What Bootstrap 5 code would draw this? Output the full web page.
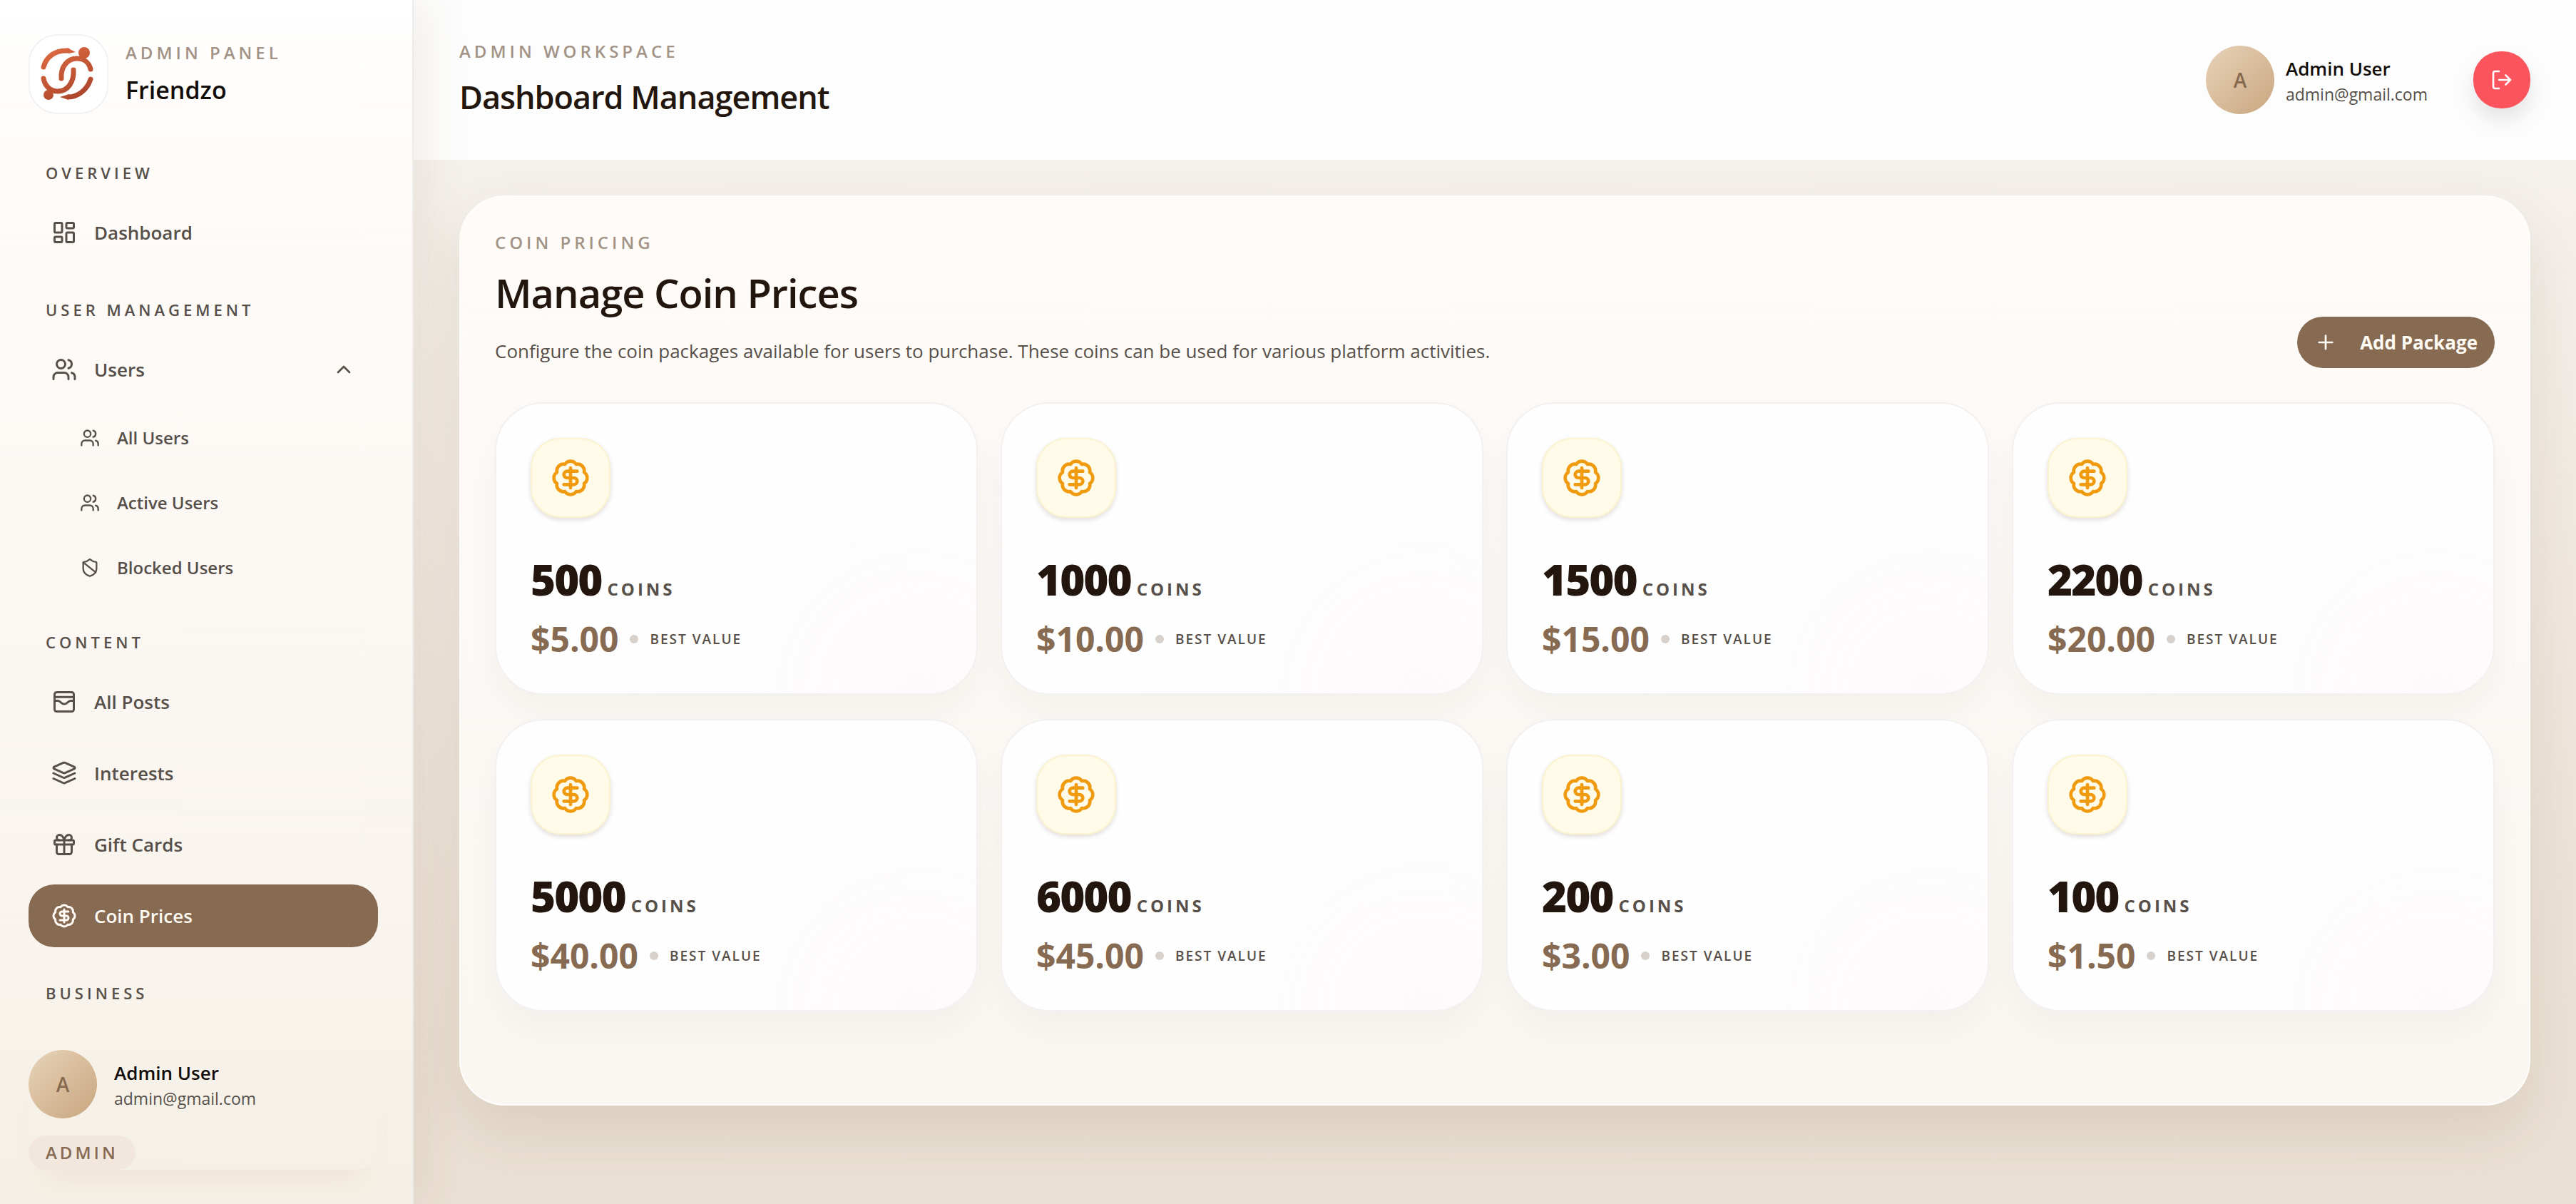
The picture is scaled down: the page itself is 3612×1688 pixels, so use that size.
<!DOCTYPE html>
<html lang="en">
<head>
<meta charset="utf-8">
<meta name="viewport" content="width=device-width, initial-scale=1">
<title>Friendzo Admin</title>
<link rel="stylesheet" href="https://cdn.jsdelivr.net/npm/bootstrap@5.3.0/dist/css/bootstrap.min.css">
<style>
:root{--ink:#22160e;--muted:#57504a;--brown:#876a52;--soft:#a29386}
body{font-family:"Open Sans","Noto Sans",sans-serif;font-size:26px;color:var(--ink);background:linear-gradient(180deg,#f7f4f2 0%,#f4efea 20%,#ece2d7 75%,#eae0d3 100%);background-attachment:fixed}
a{text-decoration:none}
.ico{width:36px;height:36px;fill:none;stroke:currentColor;stroke-width:2;stroke-linecap:round;stroke-linejoin:round;flex:none}
.ico-md{width:32px;height:32px}
.ico-sm{width:28px;height:28px}
.eyebrow{font-size:24px;line-height:32px;font-weight:600;letter-spacing:5px;color:var(--soft);text-transform:uppercase}

.side{width:580px;flex:none;padding:48px 48px 48px 40px;border-right:2px solid #eeecea;background:linear-gradient(180deg,#fff 0%,#fffbf8 14%,#fbf7f3 50%,#f8f3ec 80%,#f5f0e5 100%);box-shadow:16px 0 60px rgba(120,90,40,.09);position:relative;z-index:2}
.brand{gap:24px;margin-bottom:66px;color:#120d09}
.brand-logo{width:112px;height:112px;border:2px solid #f3f2f2;border-radius:40px;background:#fff}
.brand-text{gap:12px}
.brand-name{font-size:34px;line-height:48px;font-weight:600}
.nav-label{font-size:22px;line-height:32px;font-weight:600;letter-spacing:5px;color:var(--muted);padding-left:24px;margin:0 0 24px}
.nav-group{margin-bottom:48px}
.side-link{height:88px;border:0;background:none;border-radius:36px;padding:0 32px;gap:24px;color:var(--muted);font-weight:600;width:100%}
.side-link.active{background:var(--brown);color:#fffaf3}
.nav-stack{gap:12px}
.sub-stack{gap:11px;padding-top:12px}
.sub-link{height:80px;padding-left:72px;gap:24px;color:var(--muted);font-weight:600;font-size:24px}
.avatar{width:96px;height:96px;border-radius:50%;background:linear-gradient(135deg,#e8d3ba,#c8a67e);color:#86694f;font-size:28px;font-weight:600;flex:none}
.user-name{font-size:26px;line-height:40px;font-weight:600;color:#120d09}
.user-mail{font-size:23px;line-height:32px;color:var(--muted)}
.role-tag{font-size:24px;line-height:48px;font-weight:600;letter-spacing:4px;color:var(--brown);background:#f1e7df;border-radius:24px;padding:0 24px;margin-top:24px;display:block;width:max-content}
.side-foot{margin-top:auto;border-radius:32px;box-shadow:0 36px 40px -24px rgba(190,110,90,.1)}

.topbar{background:#fdfdfd;padding:56px 64px}
.topbar-title{font-size:45px;line-height:64px;font-weight:600;letter-spacing:-1px;margin:16px 0 0}
.logout{width:80px;height:80px;border:0;border-radius:38px;background:#fb545c;color:#fff;box-shadow:0 16px 28px rgba(60,60,70,.13)}
.work{padding:50px 64px 138px}
.panel{border:2px solid #fefdfb;border-radius:64px;padding:48px 48px 130px;background:linear-gradient(180deg,#fefbf8,#faf7f3);box-shadow:0 36px 80px rgba(100,70,30,.12)}
.panel-title{font-size:56px;line-height:80px;font-weight:600;letter-spacing:-1px;margin:14px 0 0}
.panel-text{line-height:48px;color:var(--muted);margin:18px 0 0}
.add-btn{height:72px;border:0;border-radius:36px;background:var(--brown);color:#fffaf3;font-weight:700;padding:0 24px;gap:32px}
.packs{--bs-gutter-x:32px;--bs-gutter-y:34px;padding-top:48px}
.pack{border:2px solid #f2f0f0;border-radius:68px;padding:48px;background:radial-gradient(circle at 88% 100%,#fdfafb 0,#fefdfd 34%,#fefefe 60%);box-shadow:0 24px 48px rgba(60,40,30,.04)}
.pack-icon{width:112px;height:112px;border:2px solid #fbf3d0;border-radius:42px;background:#fffbe8;color:#f09a10;box-shadow:0 3px 6px rgba(100,70,60,.18)}
.pack-icon .ico{width:56px;height:56px}
.pack-count{gap:8px;margin-top:56px}
.pack-num{font-family:"Noto Sans","Open Sans",sans-serif;font-size:60px;line-height:60px;font-weight:900;letter-spacing:-2px}
.pack-unit{font-size:24px;line-height:24px;font-weight:700;letter-spacing:4px;color:var(--muted)}
.pack-price{gap:16px;margin-top:26px;line-height:56px}
.pack-cost{font-size:48px;font-weight:700;color:var(--brown)}
.pack-dot{width:12px;height:12px;border-radius:50%;background:#d8d0ca}
.pack-note{font-size:19px;font-weight:600;letter-spacing:2px;color:var(--muted)}
</style>
</head>
<body>
<svg class="d-none" aria-hidden="true">
<symbol id="i-dash" viewBox="0 0 24 24"><rect width="7" height="9" x="3" y="3" rx="1"/><rect width="7" height="5" x="14" y="3" rx="1"/><rect width="7" height="9" x="14" y="12" rx="1"/><rect width="7" height="5" x="3" y="16" rx="1"/></symbol>
<symbol id="i-users" viewBox="0 0 24 24"><path d="M16 21v-2a4 4 0 0 0-4-4H6a4 4 0 0 0-4 4v2"/><circle cx="9" cy="7" r="4"/><path d="M22 21v-2a4 4 0 0 0-3-3.87M16 3.13a4 4 0 0 1 0 7.75"/></symbol>
<symbol id="i-up" viewBox="0 0 24 24"><path d="m18 15-6-6-6 6"/></symbol>
<symbol id="i-shield" viewBox="0 0 24 24"><path d="M20 13c0 5-3.5 7.500-7.660 8.950a1 1 0 0 1-.67-.01C7.500 20.500 4 18 4 13V6a1 1 0 0 1 1-1c2 0 4.500-1.200 6.240-2.720a1.170 1.170 0 0 1 1.520 0C14.510 3.810 17 5 19 5a1 1 0 0 1 1 1z"/><path d="m4 5.500 15 12"/></symbol>
<symbol id="i-posts" viewBox="0 0 24 24"><rect width="18" height="18" x="3" y="3" rx="2"/><path d="M3 7.500h18M3 11h3c.8 0 1.600.3 2.100.9l1.100.9c1.600 1.600 4.100 1.600 5.700 0l1.100-.9c.5-.5 1.300-.9 2.100-.9H21"/></symbol>
<symbol id="i-layers" viewBox="0 0 24 24"><path d="m12.830 2.180a2 2 0 0 0-1.660 0L2.600 6.080a1 1 0 0 0 0 1.830l8.580 3.910a2 2 0 0 0 1.660 0l8.580-3.900a1 1 0 0 0 0-1.830z"/><path d="m22 12-9.170 4.160a2 2 0 0 1-1.660 0L2 12M22 17l-9.170 4.160a2 2 0 0 1-1.660 0L2 17"/></symbol>
<symbol id="i-gift" viewBox="0 0 24 24"><rect x="3" y="8" width="18" height="4" rx="1"/><path d="M12 8v13M19 12v7a2 2 0 0 1-2 2H7a2 2 0 0 1-2-2v-7M7.500 8a2.500 2.500 0 0 1 0-5A4.800 8 0 0 1 12 8a4.800 8 0 0 1 4.500-5 2.500 2.500 0 0 1 0 5"/></symbol>
<symbol id="i-coin" viewBox="0 0 24 24"><path d="M3.850 8.620a4 4 0 0 1 4.780-4.770 4 4 0 0 1 6.740 0 4 4 0 0 1 4.780 4.780 4 4 0 0 1 0 6.740 4 4 0 0 1-4.770 4.780 4 4 0 0 1-6.750 0 4 4 0 0 1-4.780-4.770 4 4 0 0 1 0-6.760Z"/><path d="M16 8h-6a2 2 0 1 0 0 4h4a2 2 0 1 1 0 4H8M12 18V6"/></symbol>
<symbol id="i-out" viewBox="0 0 24 24"><path d="M9 21H5a2 2 0 0 1-2-2V5a2 2 0 0 1 2-2h4M16 17l5-5-5-5M21 12H9"/></symbol>
<symbol id="i-plus" viewBox="0 0 24 24"><path d="M5 12h14M12 5v14"/></symbol>
</svg>

<div class="d-flex min-vh-100">
<aside class="side d-flex flex-column">
  <a href="#" class="brand d-flex align-items-center">
    <span class="brand-logo d-flex align-items-center justify-content-center">
      <svg width="84" height="84" viewBox="0 0 84 84" fill="none" stroke="url(#lg)" stroke-width="7" stroke-linecap="round" role="img" aria-label="Friendzo logo">
        <defs><linearGradient id="lg" gradientUnits="userSpaceOnUse" x1="20" y1="4" x2="60" y2="80"><stop offset="0" stop-color="#dd6a41"/><stop offset="1" stop-color="#a8432a"/></linearGradient></defs>
        <path d="M7 32C11 17 24 8 41 9M32 48C31 32 40 20 54 20c10 0 17 6 19 15M7 48c2 11 10 18 20 18 14 0 23-13 22-30M73 49C68 65 54 74 42 74"/>
        <g fill="url(#lg)" stroke="none"><circle cx="64" cy="12" r="8"/><circle cx="14" cy="71" r="7"/><path d="M40 5l12 6-10 2zM43 70l-13 4 12 4z"/></g>
      </svg>
    </span>
    <span class="brand-text d-flex flex-column"><span class="eyebrow">Admin Panel</span><span class="brand-name">Friendzo</span></span>
  </a>
  <nav aria-label="Main">
    <div class="nav-group">
      <h2 class="nav-label">OVERVIEW</h2>
      <a href="#" class="side-link d-flex align-items-center"><svg class="ico"><use href="#i-dash"/></svg>Dashboard</a>
    </div>
    <div class="nav-group">
      <h2 class="nav-label">USER MANAGEMENT</h2>
      <button type="button" class="side-link d-flex align-items-center" aria-expanded="true"><svg class="ico"><use href="#i-users"/></svg>Users<svg class="ico ico-md ms-auto"><use href="#i-up"/></svg></button>
      <div class="sub-stack d-flex flex-column">
        <a href="#" class="sub-link d-flex align-items-center"><svg class="ico ico-sm"><use href="#i-users"/></svg>All Users</a>
        <a href="#" class="sub-link d-flex align-items-center"><svg class="ico ico-sm"><use href="#i-users"/></svg>Active Users</a>
        <a href="#" class="sub-link d-flex align-items-center"><svg class="ico ico-sm"><use href="#i-shield"/></svg>Blocked Users</a>
      </div>
    </div>
    <div class="nav-group">
      <h2 class="nav-label">CONTENT</h2>
      <div class="nav-stack d-flex flex-column">
        <a href="#" class="side-link d-flex align-items-center"><svg class="ico"><use href="#i-posts"/></svg>All Posts</a>
        <a href="#" class="side-link d-flex align-items-center"><svg class="ico"><use href="#i-layers"/></svg>Interests</a>
        <a href="#" class="side-link d-flex align-items-center"><svg class="ico"><use href="#i-gift"/></svg>Gift Cards</a>
        <a href="#" class="side-link active d-flex align-items-center" aria-current="page"><svg class="ico"><use href="#i-coin"/></svg>Coin Prices</a>
      </div>
    </div>
    <h2 class="nav-label">BUSINESS</h2>
  </nav>
  <div class="side-foot">
    <div class="d-flex align-items-center gap-4">
      <span class="avatar d-flex align-items-center justify-content-center">A</span>
      <div><div class="user-name">Admin User</div><div class="user-mail">admin@gmail.com</div></div>
    </div>
    <span class="role-tag">ADMIN</span>
  </div>
</aside>

<div class="flex-grow-1">
  <header class="topbar d-flex align-items-center justify-content-between">
    <div><div class="eyebrow">Admin Workspace</div><h1 class="topbar-title">Dashboard Management</h1></div>
    <div class="d-flex align-items-center gap-3">
      <span class="avatar d-flex align-items-center justify-content-center">A</span>
      <div class="me-5"><div class="user-name">Admin User</div><div class="user-mail">admin@gmail.com</div></div>
      <button type="button" class="logout d-flex align-items-center justify-content-center" aria-label="Log out"><svg class="ico ico-md"><use href="#i-out"/></svg></button>
    </div>
  </header>
  <main class="work">
    <section class="panel">
      <div class="d-flex align-items-end justify-content-between">
        <div>
          <div class="eyebrow">Coin Pricing</div>
          <h2 class="panel-title">Manage Coin Prices</h2>
          <p class="panel-text">Configure the coin packages available for users to purchase. These coins can be used for various platform activities.</p>
        </div>
        <button type="button" class="add-btn d-flex align-items-center"><svg class="ico ico-md"><use href="#i-plus"/></svg>Add Package</button>
      </div>
      <div class="packs row row-cols-4">
        <div class="col"><article class="pack"><div class="pack-icon d-flex align-items-center justify-content-center"><svg class="ico"><use href="#i-coin"/></svg></div><div class="pack-count d-flex align-items-baseline"><span class="pack-num">500</span><span class="pack-unit">COINS</span></div><div class="pack-price d-flex align-items-center"><span class="pack-cost">$5.00</span><span class="pack-dot"></span><span class="pack-note">BEST VALUE</span></div></article></div>
        <div class="col"><article class="pack"><div class="pack-icon d-flex align-items-center justify-content-center"><svg class="ico"><use href="#i-coin"/></svg></div><div class="pack-count d-flex align-items-baseline"><span class="pack-num">1000</span><span class="pack-unit">COINS</span></div><div class="pack-price d-flex align-items-center"><span class="pack-cost">$10.00</span><span class="pack-dot"></span><span class="pack-note">BEST VALUE</span></div></article></div>
        <div class="col"><article class="pack"><div class="pack-icon d-flex align-items-center justify-content-center"><svg class="ico"><use href="#i-coin"/></svg></div><div class="pack-count d-flex align-items-baseline"><span class="pack-num">1500</span><span class="pack-unit">COINS</span></div><div class="pack-price d-flex align-items-center"><span class="pack-cost">$15.00</span><span class="pack-dot"></span><span class="pack-note">BEST VALUE</span></div></article></div>
        <div class="col"><article class="pack"><div class="pack-icon d-flex align-items-center justify-content-center"><svg class="ico"><use href="#i-coin"/></svg></div><div class="pack-count d-flex align-items-baseline"><span class="pack-num">2200</span><span class="pack-unit">COINS</span></div><div class="pack-price d-flex align-items-center"><span class="pack-cost">$20.00</span><span class="pack-dot"></span><span class="pack-note">BEST VALUE</span></div></article></div>
        <div class="col"><article class="pack"><div class="pack-icon d-flex align-items-center justify-content-center"><svg class="ico"><use href="#i-coin"/></svg></div><div class="pack-count d-flex align-items-baseline"><span class="pack-num">5000</span><span class="pack-unit">COINS</span></div><div class="pack-price d-flex align-items-center"><span class="pack-cost">$40.00</span><span class="pack-dot"></span><span class="pack-note">BEST VALUE</span></div></article></div>
        <div class="col"><article class="pack"><div class="pack-icon d-flex align-items-center justify-content-center"><svg class="ico"><use href="#i-coin"/></svg></div><div class="pack-count d-flex align-items-baseline"><span class="pack-num">6000</span><span class="pack-unit">COINS</span></div><div class="pack-price d-flex align-items-center"><span class="pack-cost">$45.00</span><span class="pack-dot"></span><span class="pack-note">BEST VALUE</span></div></article></div>
        <div class="col"><article class="pack"><div class="pack-icon d-flex align-items-center justify-content-center"><svg class="ico"><use href="#i-coin"/></svg></div><div class="pack-count d-flex align-items-baseline"><span class="pack-num">200</span><span class="pack-unit">COINS</span></div><div class="pack-price d-flex align-items-center"><span class="pack-cost">$3.00</span><span class="pack-dot"></span><span class="pack-note">BEST VALUE</span></div></article></div>
        <div class="col"><article class="pack"><div class="pack-icon d-flex align-items-center justify-content-center"><svg class="ico"><use href="#i-coin"/></svg></div><div class="pack-count d-flex align-items-baseline"><span class="pack-num">100</span><span class="pack-unit">COINS</span></div><div class="pack-price d-flex align-items-center"><span class="pack-cost">$1.50</span><span class="pack-dot"></span><span class="pack-note">BEST VALUE</span></div></article></div>
      </div>
    </section>
  </main>
</div>
</div>
<script src="https://cdn.jsdelivr.net/npm/bootstrap@5.3.0/dist/js/bootstrap.bundle.min.js"></script>
</body>
</html>
